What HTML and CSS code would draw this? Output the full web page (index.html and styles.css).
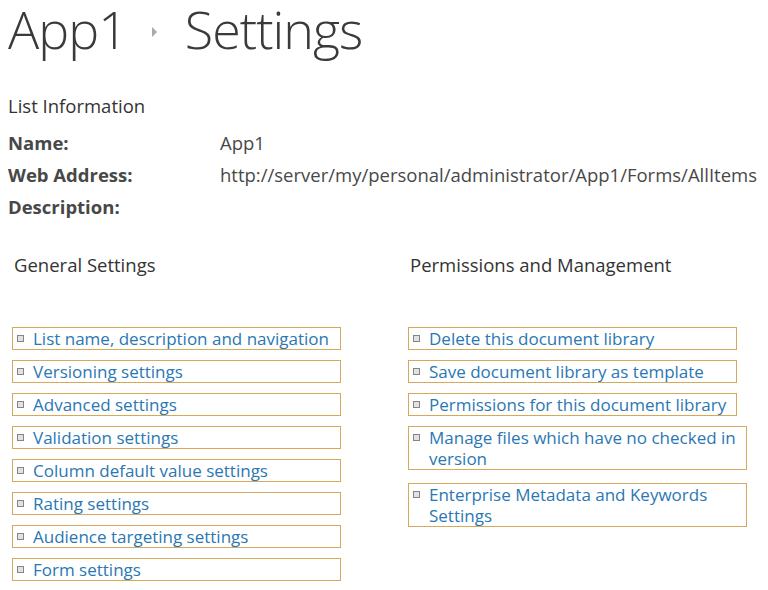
FILE: index.html
```html
<!DOCTYPE html>
<html lang="en">
<head>
    <meta charset="UTF-8">
    <title>App1 - Settings</title>
    <link rel="stylesheet" href="styles.css">
</head>
<body>
    <h1 class="title">App1 <span class="crumb-arrow"></span> Settings</h1>

    <div class="list-info">
        <div class="info-caption">List Information</div>
        <div class="info-row"><span class="info-label">Name:</span><span class="info-value">App1</span></div>
        <div class="info-row"><span class="info-label">Web Address:</span><span class="info-value">http://server/my/personal/administrator/App1/Forms/AllItems</span></div>
        <div class="info-row"><span class="info-label">Description:</span><span class="info-value"></span></div>
    </div>

    <div class="settings">
        <div class="settings-col">
            <h3 class="col-title">General Settings</h3>
            <ul class="links">
                <li><a href="#">List name, description and navigation</a></li>
                <li><a href="#">Versioning settings</a></li>
                <li><a href="#">Advanced settings</a></li>
                <li><a href="#">Validation settings</a></li>
                <li><a href="#">Column default value settings</a></li>
                <li><a href="#">Rating settings</a></li>
                <li><a href="#">Audience targeting settings</a></li>
                <li><a href="#">Form settings</a></li>
            </ul>
        </div>
        <div class="settings-col">
            <h3 class="col-title">Permissions and Management</h3>
            <ul class="links">
                <li><a href="#">Delete this document library</a></li>
                <li><a href="#">Save document library as template</a></li>
                <li><a href="#">Permissions for this document library</a></li>
                <li class="wide"><a href="#">Manage files which have no checked in version</a></li>
                <li class="wide"><a href="#">Enterprise Metadata and Keywords Settings</a></li>
            </ul>
        </div>
    </div>
</body>
</html>
```

FILE: styles.css
```css
body {
    margin: 0;
    padding: 0 8px;
    background: #fff;
    color: #444;
    font-family: "Open Sans", "Noto Sans", Arial, sans-serif;
}
.title {
    margin: 0;
    font-size: 52px;
    font-weight: 300;
    line-height: 58px;
    color: #3a3a3a;
    letter-spacing: -1px;
    white-space: nowrap;
}
.crumb-arrow {
    display: inline-block;
    width: 0;
    height: 0;
    margin: 0 15px 0 13px;
    vertical-align: 12px;
    border-left: 5px solid #aaa;
    border-top: 5px solid transparent;
    border-bottom: 5px solid transparent;
}
.list-info {
    margin-top: 35px;
    font-size: 18.5px;
}
.info-caption {
    color: #333;
    line-height: 26px;
    margin-bottom: 8px;
}
.info-row {
    display: flex;
    line-height: 32px;
    white-space: nowrap;
}
.info-label {
    width: 212px;
    font-weight: 700;
    color: #484848;
}
.info-value {
    color: #484848;
}
.settings {
    display: grid;
    grid-template-columns: 329px 340px;
    column-gap: 67px;
    padding-left: 4px;
    margin-top: 29px;
}
.col-title {
    margin: 0 0 49px 2px;
    font-size: 18.5px;
    font-weight: 400;
    color: #333;
    line-height: 26px;
}
.links {
    list-style: none;
    margin: 0;
    padding: 0;
}
.links li {
    position: relative;
    box-sizing: border-box;
    width: 329px;
    margin-bottom: 10px;
    padding: 0 2px 0 20px;
    border: 1px solid #d4a95c;
    line-height: 21px;
    font-size: 17px;
}
.links li.wide {
    width: 339px;
    margin-bottom: 13px;
}
.links li::before {
    content: "";
    position: absolute;
    left: 4px;
    top: 7px;
    width: 5px;
    height: 5px;
    border: 1px solid #858585;
    background: #e2e2e2;
}
.links a {
    color: #2a77b3;
    text-decoration: none;
}
```
